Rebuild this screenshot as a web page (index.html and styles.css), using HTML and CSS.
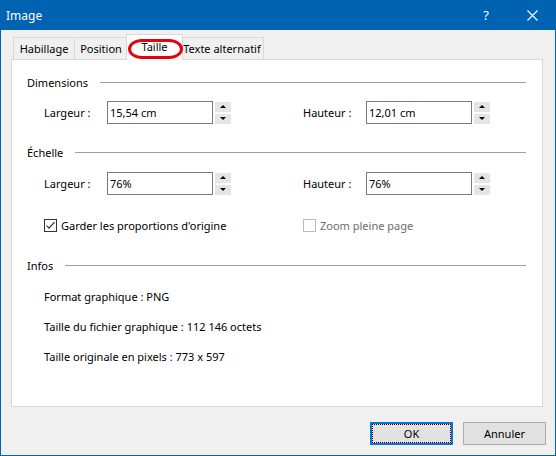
FILE: index.html
```html
<!DOCTYPE html>
<html lang="fr">
<head>
  <meta charset="UTF-8" />
  <title>Image</title>
  <link rel="stylesheet" href="styles.css">
</head>
<body>

  <div class="window">
    <div class="titlebar">
      <span class="title">Image</span>
      <span class="caption-btn help">?</span>
      <span class="caption-btn close">
        <svg width="11" height="11" viewBox="0 0 11 11"><path d="M0.5 0.5L10.5 10.5M10.5 0.5L0.5 10.5" stroke="#fff" stroke-width="1.1" fill="none"/></svg>
      </span>
    </div>

    <div class="body">
      <div class="tabs">
        <div class="tab tab-wrap">Habillage</div>
        <div class="tab tab-pos">Position</div>
        <div class="tab active">Taille<span class="mark"></span></div>
        <div class="tab tab-alt">Texte alternatif</div>
      </div>

      <div class="panel">
        <div class="group-head"><span>Dimensions</span><div class="rule"></div></div>
        <div class="row first">
          <div class="field">
            <label>Largeur :</label>
            <input type="text" value="15,54 cm" />
            <div class="arrows"><span class="up"></span><span class="down"></span></div>
          </div>
          <div class="field">
            <label>Hauteur :</label>
            <input type="text" value="12,01 cm" />
            <div class="arrows"><span class="up"></span><span class="down"></span></div>
          </div>
        </div>

        <div class="group-head scale-head"><span>Échelle</span><div class="rule"></div></div>
        <div class="row first">
          <div class="field">
            <label>Largeur :</label>
            <input type="text" value="76%" />
            <div class="arrows"><span class="up"></span><span class="down"></span></div>
          </div>
          <div class="field">
            <label>Hauteur :</label>
            <input type="text" value="76%" />
            <div class="arrows"><span class="up"></span><span class="down"></span></div>
          </div>
        </div>

        <div class="row checks">
          <div class="field">
            <span class="check">
              <svg width="11" height="11" viewBox="0 0 11 11"><path d="M1.5 5.5L4 8.2L9.5 2.2" stroke="#222" stroke-width="1.1" fill="none"/></svg>
            </span>
            Garder les proportions d'origine
          </div>
          <div class="field disabled">
            <span class="check"></span>
            Zoom pleine page
          </div>
        </div>

        <div class="group-head infos-head"><span>Infos</span><div class="rule"></div></div>
        <div class="info">Format graphique : PNG</div>
        <div class="info">Taille du fichier graphique : 112 146 octets</div>
        <div class="info">Taille originale en pixels : 773 x 597</div>
      </div>

      <div class="buttons">
        <button class="btn default">OK</button>
        <button class="btn">Annuler</button>
      </div>
    </div>
  </div>

</body>
</html>
```

FILE: styles.css
```css
* {
  box-sizing: border-box;
}

body {
  margin: 0;
  font-family: "Noto Sans", sans-serif;
  font-size: 11px;
  color: #000;
  background: #fff;
}

.window {
  width: 556px;
  height: 456px;
  display: flex;
  flex-direction: column;
  background: #f0f0f0;
  border: 1px solid #0063b1;
  border-top: none;
}

/* title bar */
.titlebar {
  height: 30px;
  flex-shrink: 0;
  display: flex;
  align-items: center;
  background: #0063b1;
  color: #fff;
  font-size: 12px;
}

.title {
  padding-left: 5px;
}

.caption-btn {
  width: 46px;
  height: 30px;
  display: flex;
  align-items: center;
  justify-content: center;
}

.help {
  margin-left: auto;
  font-size: 13px;
}

.body {
  flex: 1;
  display: flex;
  flex-direction: column;
  padding: 4px 12px 10px 10px;
}

/* tabs */
.tabs {
  display: flex;
  align-items: flex-end;
  height: 25px;
  padding-left: 2px;
}

.tab {
  height: 22px;
  display: flex;
  align-items: center;
  justify-content: center;
  background: #f0f0f0;
  border: 1px solid #d9d9d9;
  border-bottom: none;
}

.tab + .tab {
  margin-left: -1px;
}

.tab-wrap { width: 62px; }
.tab-pos { width: 54px; }
.tab-alt { width: 84px; }

.tab.active {
  position: relative;
  z-index: 1;
  width: 57px;
  height: 26px;
  margin: 0 -2px -1px -2px;
  padding-bottom: 3px;
  background: #fff;
}

.mark {
  position: absolute;
  left: 1px;
  top: 4px;
  width: 55px;
  height: 20px;
  border: 3px solid #e8000b;
  border-radius: 14px / 10px;
}

/* main panel */
.panel {
  flex: 1;
  background: #fff;
  border: 1px solid #d9d9d9;
  padding: 12px 16px 0 15px;
}

.group-head {
  display: flex;
  align-items: center;
  height: 20px;
}

.group-head .rule {
  flex: 1;
  margin-left: 12px;
  border-top: 1px solid #a0a0a0;
}

.scale-head {
  margin-top: 18px;
}

.infos-head {
  margin-top: 20px;
}

.row {
  display: flex;
  align-items: center;
  margin-left: 17px;
}

.row.first {
  height: 23px;
  margin-top: 9px;
}

.scale-head + .row.first {
  margin-top: 10px;
}

.field {
  width: 259px;
  flex-shrink: 0;
  display: flex;
  align-items: center;
}

.field label {
  width: 63px;
}

.field input {
  width: 106px;
  height: 23px;
  padding: 0 2px;
  border: 1px solid #7a7a7a;
  font: inherit;
  color: #000;
  outline: none;
}

.arrows {
  display: flex;
  flex-direction: column;
  gap: 2px;
  margin-left: 2px;
}

.arrows span {
  width: 16px;
  height: 10px;
  display: flex;
  align-items: center;
  justify-content: center;
  background: #e5e5e5;
}

.arrows span::before {
  content: "";
  border-left: 3px solid transparent;
  border-right: 3px solid transparent;
}

.arrows .up::before {
  border-bottom: 3px solid #000;
}

.arrows .down::before {
  border-top: 3px solid #000;
}

.row.checks {
  height: 20px;
  margin-top: 20px;
}

.check {
  width: 13px;
  height: 13px;
  margin-right: 4px;
  display: flex;
  align-items: center;
  justify-content: center;
  border: 1px solid #333;
  background: #fff;
}

.disabled {
  color: #6d6d6d;
}

.disabled .check {
  border-color: #bcbcbc;
}

.info {
  height: 20px;
  margin: 10px 0 0 17px;
  display: flex;
  align-items: center;
}

.infos-head + .info {
  margin-top: 11px;
}

/* bottom buttons */
.buttons {
  display: flex;
  justify-content: flex-end;
  gap: 10px;
  margin: 15px -3px 0 0;
}

.btn {
  width: 83px;
  height: 23px;
  font: inherit;
  color: #000;
  background: #e1e1e1;
  border: 1px solid #adadad;
}

.btn.default {
  border: 2px solid #0078d7;
  outline: 1px dotted #000;
  outline-offset: -3px;
}
```
